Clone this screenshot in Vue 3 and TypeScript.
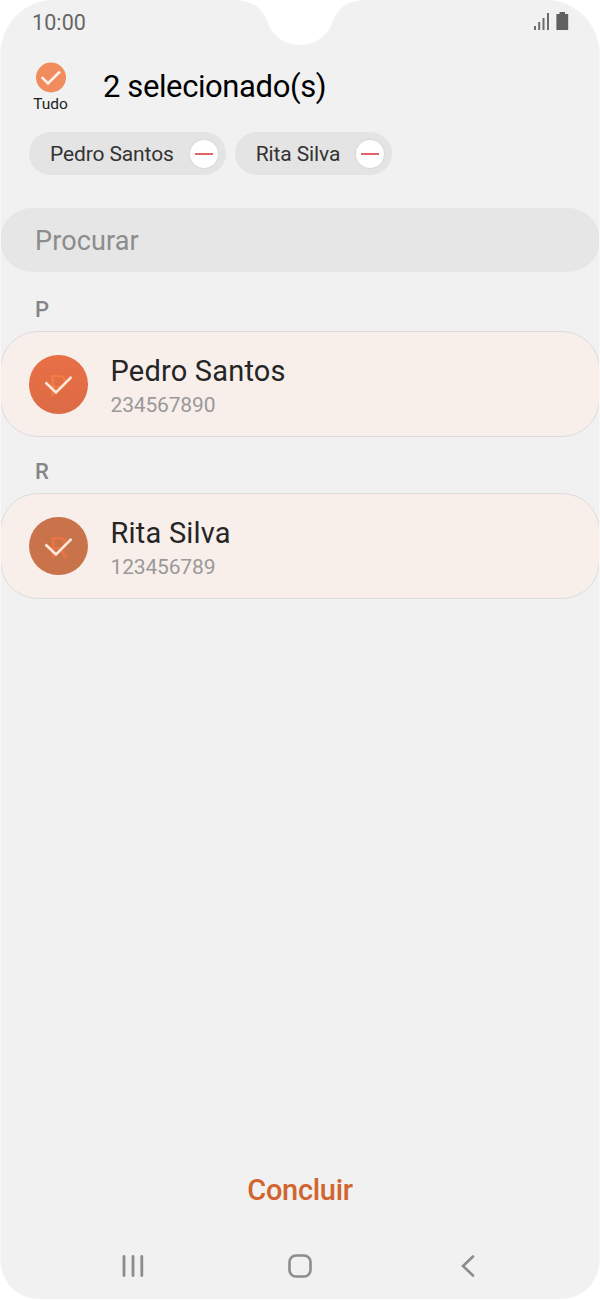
<script setup lang="ts">
interface Contact {
  name: string
  phone: string
  initial: string
  tone: string
}

const contacts: Contact[] = [
  { name: 'Pedro Santos', phone: '234567890', initial: 'P', tone: 'coral' },
  { name: 'Rita Silva', phone: '123456789', initial: 'R', tone: 'clay' },
]
</script>

<template>
  <div class="page">
    <main class="screen">
      <svg class="notch" width="130" height="46" viewBox="0 0 130 46" aria-hidden="true">
        <path d="M0 0C20 1 27 9 31.500 20C36 34 48 45 65 45C82 45 94 34 98.500 20C103 9 110 1 130 0Z" fill="#fff" />
      </svg>

      <header class="status">
        <span class="clock">10:00</span>
        <svg class="signals" width="38" height="22" viewBox="0 0 38 22" aria-hidden="true">
          <g fill="#6b6b6b">
            <rect x="1" y="15" width="2" height="4" />
            <rect x="5.200" y="11" width="2" height="8" />
            <rect x="9.500" y="7" width="2" height="12" />
            <rect x="14" y="2" width="2" height="17" />
            <path d="M26.500 1H32V3H35.200V19H23.400V3H26.500Z" fill="#606060" />
          </g>
        </svg>
      </header>

      <section class="heading">
        <div class="all">
          <svg width="30" height="31" viewBox="0 -0.500 30 31" aria-hidden="true">
            <circle cx="15" cy="15" r="15" fill="#f08c5e" />
            <path d="M5.700 14.600L12 21L24 9" fill="none" stroke="#fff3ec" stroke-width="2.600" />
          </svg>
          <span class="all-label">Tudo</span>
        </div>
        <h1 class="title"><span>2 selecionado(s)</span></h1>
      </section>

      <div class="chips">
        <div v-for="c in contacts" :key="c.name" class="chip">
          <span class="chip-name">{{ c.name }}</span>
          <span class="remove"><i></i></span>
        </div>
      </div>

      <div class="search"><span>Procurar</span></div>

      <section v-for="c in contacts" :key="c.phone" class="group">
        <h2 class="letter">{{ c.initial }}</h2>
        <article class="card">
          <div class="avatar" :class="c.tone">
            <span class="initial">{{ c.initial }}</span>
            <svg class="tick" width="58" height="58" viewBox="0 0 58 58" aria-hidden="true">
              <path d="M16.500 27.500L27 37.500L42.500 21.800" fill="none" stroke="#ffe9dd" stroke-width="2.600" />
            </svg>
          </div>
          <div class="info">
            <div class="name"><span>{{ c.name }}</span></div>
            <div class="phone"><span>{{ c.phone }}</span></div>
          </div>
        </article>
      </section>

      <footer class="bottom">
        <div class="done"><span>Concluir</span></div>
        <nav class="nav">
          <svg width="24" height="24" viewBox="0 0 24 24" fill="none" stroke="#8c8c8c" stroke-width="2.800" stroke-linecap="round" aria-hidden="true">
            <path d="M3 2.500V21.500M12 2.500V21.500M20.800 2.500V21.500" />
          </svg>
          <svg width="26" height="26" viewBox="0 0 26 26" fill="none" stroke="#8c8c8c" stroke-width="2.600" aria-hidden="true">
            <rect x="2.500" y="2.500" width="21" height="21" rx="6.500" />
          </svg>
          <svg width="24" height="24" viewBox="0 0 24 24" fill="none" stroke="#8c8c8c" stroke-width="2.600" stroke-linecap="round" aria-hidden="true">
            <path d="M18 2.500L8 12L18 21.500" />
          </svg>
        </nav>
      </footer>
    </main>
  </div>
</template>

<style>
body {
  margin: 0;
  background: #fff;
}
</style>

<style scoped>
.page {
  box-sizing: border-box;
  width: 600px;
  height: 1300px;
  padding: 0 0 1px;
  background: #fff;
  font-family: Roboto, "Liberation Sans", sans-serif;
}
.screen {
  box-sizing: border-box;
  position: relative;
  display: flex;
  flex-direction: column;
  height: 1299px;
  border: solid #f8f8f8;
  border-width: 0 1px;
  border-radius: 54px 54px 38px 38px;
  background: #f1f1f1;
  overflow: hidden;
  white-space: nowrap;
}
.notch {
  position: absolute;
  top: 0;
  left: 234px;
}
.status {
  display: flex;
  align-items: center;
  justify-content: space-between;
  height: 44px;
  padding: 0 28px 0 31px;
}
.clock {
  font-size: 21.500px;
  letter-spacing: 0.1px;
  color: #666;
}
.heading {
  display: flex;
  height: 88px;
}
.all {
  display: flex;
  flex-direction: column;
  align-items: center;
  width: 99px;
  padding-top: 18px;
}
.all-label {
  margin-top: 1px;
  font-size: 15.500px;
  line-height: 20px;
  color: #222;
}
.title {
  margin: 0 0 0 3px;
  font-size: 31px;
  line-height: 86px;
  font-weight: 400;
  letter-spacing: -0.400px;
  color: #000;
}
.chips {
  display: flex;
  gap: 9px;
  padding-left: 28px;
}
.chip {
  display: flex;
  align-items: center;
  gap: 16px;
  height: 43px;
  padding: 0 8px 0 21px;
  border-radius: 22px;
  background: #e4e4e4;
}
.chip-name {
  padding-top: 2px;
  font-size: 21px;
  line-height: 41px;
  letter-spacing: -0.120px;
  color: #333;
}
.remove {
  display: flex;
  align-items: center;
  justify-content: center;
  width: 28px;
  height: 28px;
  border-radius: 50%;
  background: #fff;
  box-shadow: 0 0 2px rgba(0, 0, 0, 0.15);
}
.remove i {
  width: 18px;
  height: 2px;
  background: #e26464;
}
.search {
  height: 64px;
  margin: 33px -1px 0;
  padding-left: 35px;
  border-radius: 32px;
  background: #e6e6e6;
  font-size: 27px;
  line-height: 66px;
  letter-spacing: 0.120px;
  color: #8c8c8c;
}
.group {
  height: 161.500px;
}
.search + .group {
  margin-top: 3px;
}
.letter {
  height: 56px;
  margin: 0;
  padding-left: 34px;
  font-size: 22px;
  line-height: 69px;
  font-weight: 500;
  color: #858585;
}
.card {
  box-sizing: border-box;
  display: flex;
  height: 106px;
  margin: 0 -1px;
  padding: 23px 28px;
  border: 1px solid #dddcdd;
  border-radius: 38px;
  background: #f8eeea;
}
.avatar {
  position: relative;
  width: 58.500px;
  height: 58.500px;
  border-radius: 50%;
  text-align: center;
}
.coral {
  background: linear-gradient(#e96f45, #dc6b46);
}
.clay {
  background: #c9734a;
}
.initial {
  font-size: 30px;
  line-height: 61px;
  color: #ef7c42;
}
.clay .initial {
  color: #ea7442;
}
.tick {
  position: absolute;
  top: 0;
  left: 0;
}
.info {
  margin-left: 23px;
}
.name {
  height: 33px;
  font-size: 29px;
  line-height: 33px;
  letter-spacing: 0.200px;
  color: #252525;
}
.phone {
  height: 32px;
  font-size: 21px;
  line-height: 34px;
  letter-spacing: -0.160px;
  color: #999;
}
.bottom {
  margin-top: auto;
}
.done {
  height: 60px;
  text-align: center;
  font-size: 29px;
  line-height: 60px;
  font-weight: 500;
  letter-spacing: -0.300px;
  color: #d1652f;
}
.nav {
  display: flex;
  align-items: center;
  justify-content: space-between;
  height: 92px;
  margin-bottom: -13px;
  padding: 0 120px;
}
</style>
